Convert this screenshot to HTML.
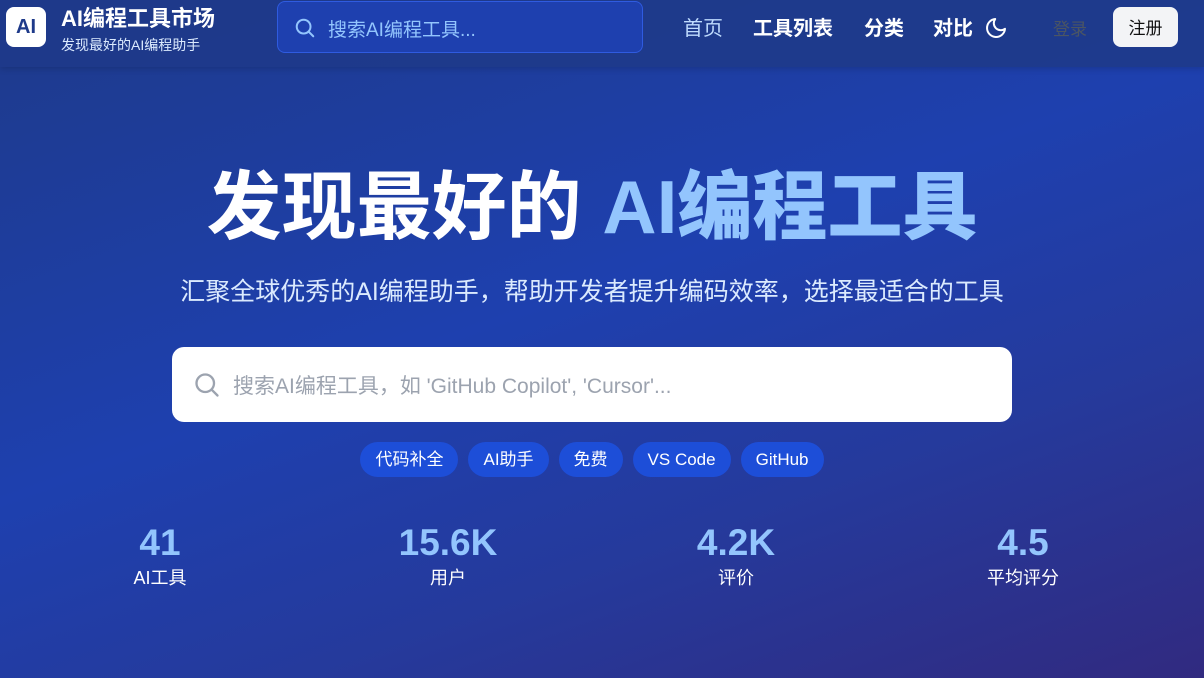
<!DOCTYPE html>
<html><head><meta charset="utf-8"><style>
*{margin:0;padding:0;box-sizing:border-box}
body{width:1204px;height:678px;overflow:hidden;font-family:"Liberation Sans","Noto Sans CJK SC",sans-serif;background:linear-gradient(160deg,#1e3a8a 0%,#1e40af 45%,#253a9c 70%,#312a80 100%);color:#fff;position:relative}
header{position:absolute;left:0;top:0;width:1204px;height:67px;background:rgba(30,58,138,0.92);box-shadow:0 2px 6px rgba(0,0,0,.15)}
.logo{position:absolute;left:6px;top:7px;width:40px;height:40px;border-radius:8px;background:#fff;color:#1e3a8a;font-weight:bold;font-size:20px;text-align:center;line-height:40px}
.brand{position:absolute;left:61px;top:5px;font-size:22px;font-weight:bold;line-height:28px}
.tag{position:absolute;left:61px;top:36px;font-size:14px;color:#dbeafe;line-height:18px}
.hs{position:absolute;left:277px;top:1px;width:366px;height:52px;border:1px solid #2f5be0;background:#1e40af;border-radius:8px}
.hs span{position:absolute;left:50px;top:13px;font-size:19px;color:#93c5fd}
.nav{position:absolute;top:17px;font-size:20px;font-weight:bold;line-height:24px}
.reg{position:absolute;left:1113px;top:7px;width:65px;height:40px;background:#f3f4f6;border-radius:8px;color:#111;font-size:17px;text-align:center;line-height:44px}
h1{position:absolute;top:162px;left:0;width:1184px;text-align:center;font-size:75px;font-weight:bold;line-height:90px}
h1 b{color:#93c5fd}
.sub{position:absolute;top:276px;left:0;width:1184px;text-align:center;font-size:25px;color:#dbeafe;line-height:32px}
.bs{position:absolute;left:172px;top:347px;width:840px;height:75px;background:#fff;border-radius:12px}
.bs span{position:absolute;left:61px;top:23px;font-size:21px;color:#9ca3af}
.tags{position:absolute;top:442px;left:0;width:1184px;text-align:center;font-size:0}
.tags span{display:inline-block;height:35px;line-height:36px;padding:0 15px;background:#1d4ed8;border-radius:18px;font-size:17px;margin:0 5px}
.st{position:absolute;top:522px;width:288px;text-align:center}
.st .n{font-size:37px;font-weight:bold;color:#93c5fd;line-height:42px}
.st .l{font-size:18px;line-height:26px;padding-top:1px}
</style></head><body>
<header>
<div class="logo">AI</div>
<div class="brand">AI编程工具市场</div>
<div class="tag">发现最好的AI编程助手</div>
<div class="hs"><svg style="position:absolute;left:16px;top:15px" width="22" height="22" viewBox="0 0 24 24" fill="none" stroke="#93c5fd" stroke-width="2.2" stroke-linecap="round"><circle cx="10.5" cy="10.5" r="7.5"/><path d="M16 16l5 5"/></svg><span>搜索AI编程工具...</span></div>
<div class="nav" style="left:683px;color:#bfdbfe;font-weight:normal">首页</div>
<div class="nav" style="left:753px">工具列表</div>
<div class="nav" style="left:864px">分类</div>
<div class="nav" style="left:933px">对比</div>
<svg style="position:absolute;left:984px;top:16px" width="24" height="24" viewBox="0 0 24 24" fill="none" stroke="#fff" stroke-width="2" stroke-linecap="round" stroke-linejoin="round"><path d="M21 12.8A9 9 0 1 1 11.2 3a7 7 0 0 0 9.8 9.8z"/></svg>
<div class="nav" style="left:1053px;color:#4b5563;font-weight:normal;font-size:17px;top:18px">登录</div>
<div class="reg">注册</div>
</header>
<h1>发现最好的 <b>AI编程工具</b></h1>
<div class="sub">汇聚全球优秀的AI编程助手，帮助开发者提升编码效率，选择最适合的工具</div>
<div class="bs"><svg style="position:absolute;left:21px;top:24px" width="28" height="28" viewBox="0 0 24 24" fill="none" stroke="#9ca3af" stroke-width="2" stroke-linecap="round"><circle cx="10.5" cy="10.5" r="7.5"/><path d="M16 16l5 5"/></svg><span>搜索AI编程工具，如 'GitHub Copilot', 'Cursor'...</span></div>
<div class="tags"><span>代码补全</span><span>AI助手</span><span>免费</span><span>VS Code</span><span>GitHub</span></div>
<div class="st" style="left:16px"><div class="n">41</div><div class="l">AI工具</div></div>
<div class="st" style="left:304px"><div class="n">15.6K</div><div class="l">用户</div></div>
<div class="st" style="left:592px"><div class="n">4.2K</div><div class="l">评价</div></div>
<div class="st" style="left:879px"><div class="n">4.5</div><div class="l">平均评分</div></div>
</body></html>
